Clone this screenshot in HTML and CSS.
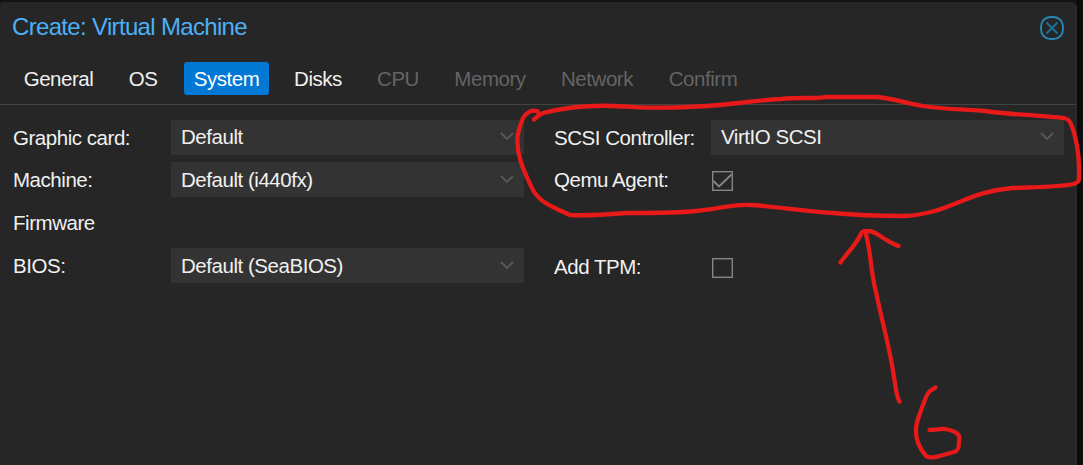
FILE: index.html
```html
<!DOCTYPE html>
<html lang="en">
<head>
<meta charset="utf-8">
<title>Create: Virtual Machine</title>
<link rel="stylesheet" href="styles.css">
</head>
<body>
<main class="dialog">
  <header class="header">
    <h1 class="title">Create: Virtual Machine</h1>
    <svg class="close" viewBox="0 0 24 24"><rect x="1" y="1" width="22" height="22" rx="9.500" fill="none" stroke="#2787b3" stroke-width="1.9"/><path d="M6.500 6.500l11 11M17.500 6.500l-11 11" stroke="#1f7099" stroke-width="2" fill="none"/></svg>
  </header>
  <nav class="tabs">
    <span class="tab general">General</span>
    <span class="tab os">OS</span>
    <span class="tab system active">System</span>
    <span class="tab disks">Disks</span>
    <span class="tab cpu disabled">CPU</span>
    <span class="tab memory disabled">Memory</span>
    <span class="tab network disabled">Network</span>
    <span class="tab confirm disabled">Confirm</span>
  </nav>
  <section class="form">
    <div class="column">
      <div class="row"><span class="label">Graphic card:</span><div class="select raised"><span>Default</span><svg class="chevron" viewBox="0 0 14 9"><path d="M1 1l6 6 6-6"/></svg></div></div>
      <div class="row"><span class="label">Machine:</span><div class="select"><span>Default (i440fx)</span><svg class="chevron" viewBox="0 0 14 9"><path d="M1 1l6 6 6-6"/></svg></div></div>
      <div class="row section"><span class="label">Firmware</span></div>
      <div class="row"><span class="label">BIOS:</span><div class="select"><span>Default (SeaBIOS)</span><svg class="chevron" viewBox="0 0 14 9"><path d="M1 1l6 6 6-6"/></svg></div></div>
    </div>
    <div class="column right">
      <div class="row"><span class="label">SCSI Controller:</span><div class="select raised"><span>VirtIO SCSI</span><svg class="chevron" viewBox="0 0 14 9"><path d="M1 1l6 6 6-6"/></svg></div></div>
      <div class="row"><span class="label">Qemu Agent:</span><svg class="checkbox" viewBox="0 0 21 20"><rect x=".7" y=".7" width="19.600" height="18.600"/><path d="M1.500 10l5.500 5.500L19.500 3.500"/></svg></div>
      <div class="row section"></div>
      <div class="row"><span class="label tpm">Add TPM:</span><svg class="checkbox" viewBox="0 0 21 20"><rect x=".7" y=".7" width="19.600" height="18.600"/></svg></div>
    </div>
  </section>
</main>
<svg class="annotation" viewBox="0 0 1083 465">
  <path d="M537.500 111.500C532 109 526 113 523 118C520 125 519 129 517.500 136C516 155 524 171 530 184C536 199 546 204 559 210L570 215C585 216 600 215 627 213C650 213 680 213 695 211C715 210 730 204 750 205C774 206 800 211 833 213C865 216 880 216 904 216C949 214 965 192 1012 188C1040 187 1060 187 1074 184C1080 182 1079 179 1079 175C1080 154 1075 132 1070 122C1068 118 1064 118 1052 117C1025 114 1012 115 985 111C960 109 940 109 923 106C905 103 889 97 874 97H825C812 99 800 97 781 99C747 101 723 106 687 107C660 109 640 107 614 106C590 105 563 108 543 113C539 115 537 116 534 119.500"/>
  <path d="M840.500 262.500C847 253 856 245 861.500 233C862 231 864 231 869 231C878 232 883 240 898.500 246"/>
  <path d="M865 231C871 249 870 269 876 292C881 317 889 345 893 371C896 387 896 397 899.500 401.500"/>
  <path d="M935.500 387.500L930 391C927 393 926 397 923 405C919 416 915 424 916 432C916 442 921 450 926 456C928 458 931 457.500 936 457L954 452C958 451 959 448 959 442C961 434 956 431 945 429C941 428.500 936 430 929.500 430"/>
</svg>
</body>
</html>
```
FILE: styles.css
```css
* { box-sizing: border-box; }

body {
  margin: 0;
  width: 1083px;
  height: 465px;
  overflow: hidden;
  background: linear-gradient(90deg, #131313 1076px, #090909 1078px, #101010);
  font-family: "Liberation Sans", Arial, sans-serif;
  font-size: 20.5px;
  letter-spacing: -0.46px;
  color: #f0f0f0;
  padding-top: 2px;
}

.dialog {
  width: 1077px;
  height: 463px;
  background: #262626;
  border-right: 1px solid #2c2c2c;
  border-radius: 3px 6px 0 0;
}

.header {
  height: 60px;
  padding: 14px 12px 0;
  display: flex;
  align-items: flex-start;
  justify-content: space-between;
}

.title {
  margin: 0;
  font-size: 24px;
  font-weight: 400;
  line-height: 22px;
  letter-spacing: -0.67px;
  color: #4bb0f5;
}

.close { width: 24px; height: 24px; }

.tabs {
  display: flex;
  gap: 16px;
  height: 43px;
  padding-left: 15px;
  border-bottom: 1px solid #434343;
}

.tab {
  height: 33px;
  line-height: 34px;
  text-align: center;
  border-radius: 3px;
}
.general { width: 87px; }
.os { width: 50px; }
.system { width: 85px; }
.disks { width: 66px; }
.cpu { width: 62px; }
.memory { width: 90px; }
.network { width: 92px; }
.confirm { width: 88px; }
.active { background: #0078d4; color: #fff; }
.disabled { color: #646464; }

.form {
  display: flex;
  gap: 30px;
  padding: 15px 12px 0 13px;
}

.column { width: 511px; }
.right { width: 510px; }
.row {
  display: flex;
  height: 35px;
  margin-bottom: 7px;
}
.row.section { height: 37px; }
.label { width: 158px; flex: none; line-height: 35px; white-space: nowrap; }
.right .label { width: 157px; }
.section .label { line-height: 38px; }
.label.tpm { line-height: 37px; }

.select {
  flex: 1;
  display: flex;
  align-items: center;
  justify-content: space-between;
  padding: 1px 10px 1px;
  background: #333;
}
.raised { padding: 0 10px 2px; }

.chevron { width: 14px; height: 9px; }
.chevron path { fill: none; stroke: #585858; stroke-width: 1.9; }

.checkbox {
  width: 21px;
  height: 20px;
  margin: 9px 0 0 1px;
  fill: none;
  stroke: #858585;
  stroke-width: 1.4;
}
.checkbox path { stroke-width: 1.9; }
.tpm + .checkbox { margin-top: 10px; }

.annotation {
  position: absolute;
  top: 0;
  left: 0;
  width: 1083px;
  height: 465px;
  fill: none;
  stroke: #e81919;
  stroke-width: 4.3;
  stroke-linecap: round;
  stroke-linejoin: round;
}
```
